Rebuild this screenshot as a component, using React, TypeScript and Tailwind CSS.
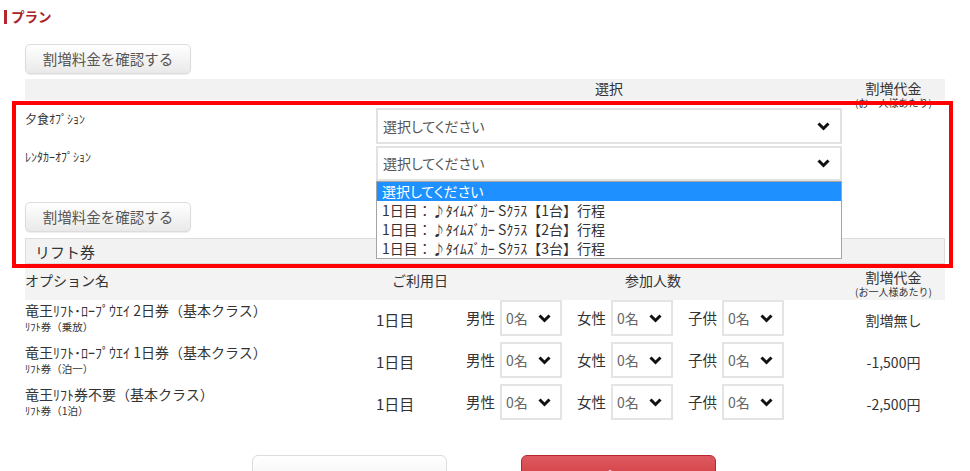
import React from "react";

const rows = [
  { name: "竜王ﾘﾌﾄ･ﾛｰﾌﾟｳｴｲ 2日券（基本クラス）", sub: "ﾘﾌﾄ券（乗放）", price: "割増無し" },
  { name: "竜王ﾘﾌﾄ･ﾛｰﾌﾟｳｴｲ 1日券（基本クラス）", sub: "ﾘﾌﾄ券（泊一）", price: "-1,500円" },
  { name: "竜王ﾘﾌﾄ券不要（基本クラス）", sub: "ﾘﾌﾄ券（1泊）", price: "-2,500円" },
];

const carOptions = [
  "1日目：♪ﾀｲﾑｽﾞｶｰ Sｸﾗｽ【1台】行程",
  "1日目：♪ﾀｲﾑｽﾞｶｰ Sｸﾗｽ【2台】行程",
  "1日目：♪ﾀｲﾑｽﾞｶｰ Sｸﾗｽ【3台】行程",
];

function Chevron() {
  return (
    <svg width="13" height="9" viewBox="0 0 13 9" className="shrink-0">
      <polyline points="1.5,1.5 6.5,6.5 11.5,1.5" fill="none" stroke="#111" strokeWidth="3" />
    </svg>
  );
}

function GreyButton({ label }: { label: string }) {
  return (
    <button className="flex h-[30px] w-[166px] items-center justify-center rounded-[5px] border border-[#dcdcdc] bg-linear-to-b from-white to-[#e9e9e9] text-[14.5px] text-[#555] shadow-[0_1px_1px_rgba(0,0,0,0.08)]">
      {label}
    </button>
  );
}

function PlanSelect({ open }: { open?: boolean }) {
  return (
    <div className="relative">
      <div className="flex h-full items-center justify-between border-2 border-[#e2e2e2] bg-white pl-[5px] pr-[10px]">
        <span className="text-[14px] text-[#555] [font-feature-settings:'palt']">選択してください</span>
        <Chevron />
      </div>
      {open && (
        <div className="absolute left-0 top-full z-10 w-full border border-[#a5a5a5] bg-white text-[14px] leading-[19px]">
          <div className="bg-[#1e90ff] pl-[5px] text-white [font-feature-settings:'palt']">選択してください</div>
          {carOptions.map((o) => (
            <div key={o} className="pl-[5px] text-[#333]">
              {o}
            </div>
          ))}
        </div>
      )}
    </div>
  );
}

function PersonSelect({ label }: { label: string }) {
  return (
    <div className="flex items-start gap-[5px]">
      <span className="mt-[9px] w-[29px] text-[14.5px] leading-[18px]">{label}</span>
      <div className="flex h-[36px] w-[62px] items-center justify-between border-2 border-[#e4e4e4] pl-[4px] pr-[9px]">
        <span className="text-[14px] text-[#666]">0名</span>
        <Chevron />
      </div>
    </div>
  );
}

export default function App() {
  return (
    <div className="relative h-[471px] w-[970px] overflow-hidden bg-white font-['Noto_Sans_CJK_JP','Noto_Sans',sans-serif] text-[#333]">
      {/* Title */}
      <div className="mt-[9px] flex h-[15px] items-center gap-[4px] pl-[4px]">
        <span className="h-[14px] w-[3px] bg-[#b3262d]" />
        <span className="text-[13.5px] font-bold leading-none text-[#a8232a]">プラン</span>
      </div>

      <div className="w-[945px] pl-[25px]">
        <div className="mt-[20px]">
          <GreyButton label="割増料金を確認する" />
        </div>

        {/* Option header */}
        <div className="mt-[5px] grid h-[21px] grid-cols-[351px_466px_103px] bg-[#f2f2f2] text-[14px]">
          <div />
          <div className="text-center leading-[19px]">選択</div>
          <div className="flex flex-col items-center leading-[19px]">
            <span>割増代金</span>
            <span className="text-[10px] leading-[10px]">(お一人様あたり)</span>
          </div>
        </div>

        <div className="mt-[8px] grid h-[36px] grid-cols-[351px_466px]">
          <div className="pt-[3px] text-[12px] leading-[15px]">夕食ｵﾌﾟｼｮﾝ</div>
          <PlanSelect />
        </div>
        <div className="relative z-10 mt-[2px] grid h-[35px] grid-cols-[351px_466px]">
          <div className="pt-[3px] text-[12px] leading-[15px]">ﾚﾝﾀｶｰｵﾌﾟｼｮﾝ</div>
          <PlanSelect open />
        </div>

        <div className="mt-[21px]">
          <GreyButton label="割増料金を確認する" />
        </div>

        <div className="mt-[6px] h-[26px] border border-[#dddddd] bg-[#f2f2f2] pl-[9px] text-[15px] leading-[26px]">
          リフト券
        </div>

        {/* Table */}
        <div className="mt-[1px] grid h-[35px] grid-cols-[351px_88px_378px_103px] bg-[#f3f3f3] text-[14px]">
          <div className="pt-[5px] leading-[20px]">オプション名</div>
          <div className="pt-[5px] text-center leading-[20px]">ご利用日</div>
          <div className="pt-[5px] text-center leading-[20px]">参加人数</div>
          <div className="flex flex-col items-center pt-[3px]">
            <span className="leading-[18px]">割増代金</span>
            <span className="text-[10px] leading-[12px]">(お一人様あたり)</span>
          </div>
        </div>

        {rows.map((r) => (
          <div key={r.name} className="grid h-[42px] grid-cols-[351px_88px_378px_103px]">
            <div className="flex flex-col pt-[1px]">
              <span className="text-[14px] leading-[18px]">{r.name}</span>
              <span className="text-[10.5px] leading-[16px]">{r.sub}</span>
            </div>
            <div className="pt-[10px] text-[15px] leading-[20px]">1日目</div>
            <div className="flex gap-[15px] pl-[2px]">
              <PersonSelect label="男性" />
              <PersonSelect label="女性" />
              <PersonSelect label="子供" />
            </div>
            <div className="pt-[10px] text-center text-[14px] leading-[20px]">{r.price}</div>
          </div>
        ))}
      </div>

      {/* Bottom buttons */}
      <div className="mt-[29px] flex justify-center gap-[74px] pr-[2px]">
        <button className="h-[40px] w-[195px] rounded-[6px] border border-[#dddddd] bg-linear-to-b from-white to-[#eeeeee] pt-[4px] text-[16px] leading-[20px] text-[#555]">
          戻る
        </button>
        <button className="h-[40px] w-[195px] rounded-[6px] border border-[#b8262d] bg-linear-to-b from-[#de5a60] to-[#c9262d] pt-[4px] text-[16px] font-bold leading-[20px] text-white">
          次へ
        </button>
      </div>

      {/* Highlight frame */}
      <div className="pointer-events-none absolute left-[12px] top-[101px] z-20 h-[167px] w-[941px] border-[4px] border-[#ff0000]" />
    </div>
  );
}
